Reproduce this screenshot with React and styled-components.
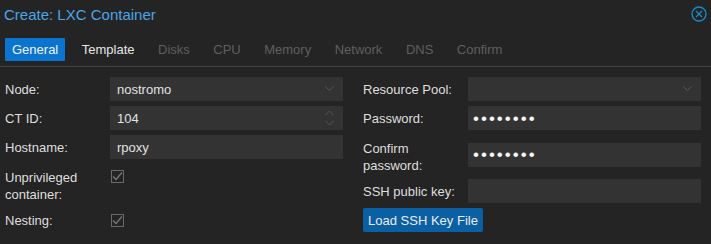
import React from "react";
import styled, { createGlobalStyle } from "styled-components";

const GlobalStyle = createGlobalStyle`
  html, body {
    margin: 0;
    padding: 0;
    background: #242424;
  }
  * {
    box-sizing: border-box;
  }
`;

const Window = styled.div`
  width: 711px;
  height: 244px;
  background: #242424;
  font-family: "Liberation Sans", Arial, sans-serif;
  font-size: 13px;
  color: #dfdfdf;
  overflow: hidden;
`;

const Header = styled.div`
  height: 30px;
  display: flex;
  align-items: center;
  justify-content: space-between;
  padding: 0 4px 1px 4px;
`;

const Title = styled.div`
  color: #4ba6e6;
  font-size: 15px;
`;

const CloseButton = styled.div`
  width: 16px;
  height: 16px;
  margin-top: -2px;
  display: flex;
`;

const TabBar = styled.div`
  display: flex;
  gap: 9.5px;
  margin-top: 8px;
  padding: 0 5px 5px;
  border-bottom: 1px solid #414141;
`;

const Tab = styled.div`
  height: 23px;
  line-height: 23px;
  padding: 0 7px;
  border-radius: 1px;
  color: ${(p) => (p.$active ? "#f2f2f2" : p.$enabled ? "#e6e6e6" : "#5f5f5f")};
  background: ${(p) => (p.$active ? "#0b74cf" : "transparent")};
`;

const Form = styled.div`
  display: grid;
  grid-template-columns: 338px 338px;
  column-gap: 20px;
  padding: 10px 10px 0 5px;
`;

const Column = styled.div`
  display: flex;
  flex-direction: column;
  gap: 5px;
`;

const Row = styled.div`
  display: flex;
  align-items: ${(p) => (p.$top ? "flex-start" : "center")};
  min-height: 24px;
`;

const Label = styled.div`
  width: 105px;
  flex: none;
  line-height: 17px;
  padding: ${(p) => (p.$multi ? "5px 0 0" : "0")};
`;

const Field = styled.div`
  flex: 1;
  height: 24px;
  background: #333333;
  display: flex;
  align-items: center;
  justify-content: space-between;
  padding: 0 9px 0 7px;
  color: #e2e2e2;
`;

const Dots = styled.span`
  font-size: 17px;
  letter-spacing: 2px;
  color: #f4f4f4;
  margin-left: -2px;
  line-height: 1;
`;

const Check = styled.div`
  width: 13px;
  height: 13px;
  margin: ${(p) => (p.$top ? "6px 0 0 1px" : "0 0 0 1px")};
  border: 1px solid #6a6a6a;
  display: flex;
  align-items: center;
  justify-content: center;
`;

const LoadButton = styled.button`
  width: 120px;
  height: 24px;
  border: none;
  border-radius: 2px;
  background: #0a60a3;
  color: #ececec;
  font-family: inherit;
  font-size: 13px;
  padding: 0;
  cursor: pointer;
`;

function Chevron() {
  return (
    <svg width="9" height="6" viewBox="0 0 9 6">
      <path d="M0.5 0.5 L4.5 4.5 L8.5 0.5" fill="none" stroke="#555" strokeWidth="1" />
    </svg>
  );
}

function Spinner() {
  return (
    <svg width="9" height="16" viewBox="0 0 9 16">
      <path d="M0.5 5 L4.5 1 L8.5 5" fill="none" stroke="#555" strokeWidth="1" />
      <path d="M0.5 11 L4.5 15 L8.5 11" fill="none" stroke="#555" strokeWidth="1" />
    </svg>
  );
}

function CheckMark() {
  return (
    <svg width="11" height="11" viewBox="0 0 11 11">
      <path d="M1 5.5 L4 8.5 L10 1.5" fill="none" stroke="#7a7a7a" strokeWidth="1.2" />
    </svg>
  );
}

const tabs = ["General", "Template", "Disks", "CPU", "Memory", "Network", "DNS", "Confirm"];

export default function App() {
  return (
    <Window>
      <GlobalStyle />
      <Header>
        <Title>Create: LXC Container</Title>
        <CloseButton>
          <svg width="16" height="16" viewBox="0 0 16 16">
            <circle cx="8" cy="8" r="7" fill="none" stroke="#1b8ac8" strokeWidth="1.3" />
            <path d="M5 5 L11 11 M11 5 L5 11" stroke="#1b8ac8" strokeWidth="1.3" />
          </svg>
        </CloseButton>
      </Header>

      <TabBar>
        {tabs.map((t, i) => (
          <Tab key={t} $active={i === 0} $enabled={i === 1}>
            {t}
          </Tab>
        ))}
      </TabBar>

      <Form>
        <Column>
          <Row>
            <Label>Node:</Label>
            <Field>
              nostromo
              <Chevron />
            </Field>
          </Row>
          <Row>
            <Label>CT ID:</Label>
            <Field>
              104
              <Spinner />
            </Field>
          </Row>
          <Row>
            <Label>Hostname:</Label>
            <Field>rpoxy</Field>
          </Row>
          <Row $top>
            <Label $multi>
              Unprivileged
              <br />
              container:
            </Label>
            <Check $top>
              <CheckMark />
            </Check>
          </Row>
          <Row>
            <Label>Nesting:</Label>
            <Check>
              <CheckMark />
            </Check>
          </Row>
        </Column>

        <Column>
          <Row>
            <Label>Resource Pool:</Label>
            <Field>
              <span />
              <Chevron />
            </Field>
          </Row>
          <Row>
            <Label>Password:</Label>
            <Field>
              <Dots>••••••••</Dots>
            </Field>
          </Row>
          <Row>
            <Label $multi>
              Confirm
              <br />
              password:
            </Label>
            <Field>
              <Dots>••••••••</Dots>
            </Field>
          </Row>
          <Row>
            <Label>SSH public key:</Label>
            <Field />
          </Row>
          <Row>
            <LoadButton>Load SSH Key File</LoadButton>
          </Row>
        </Column>
      </Form>
    </Window>
  );
}
